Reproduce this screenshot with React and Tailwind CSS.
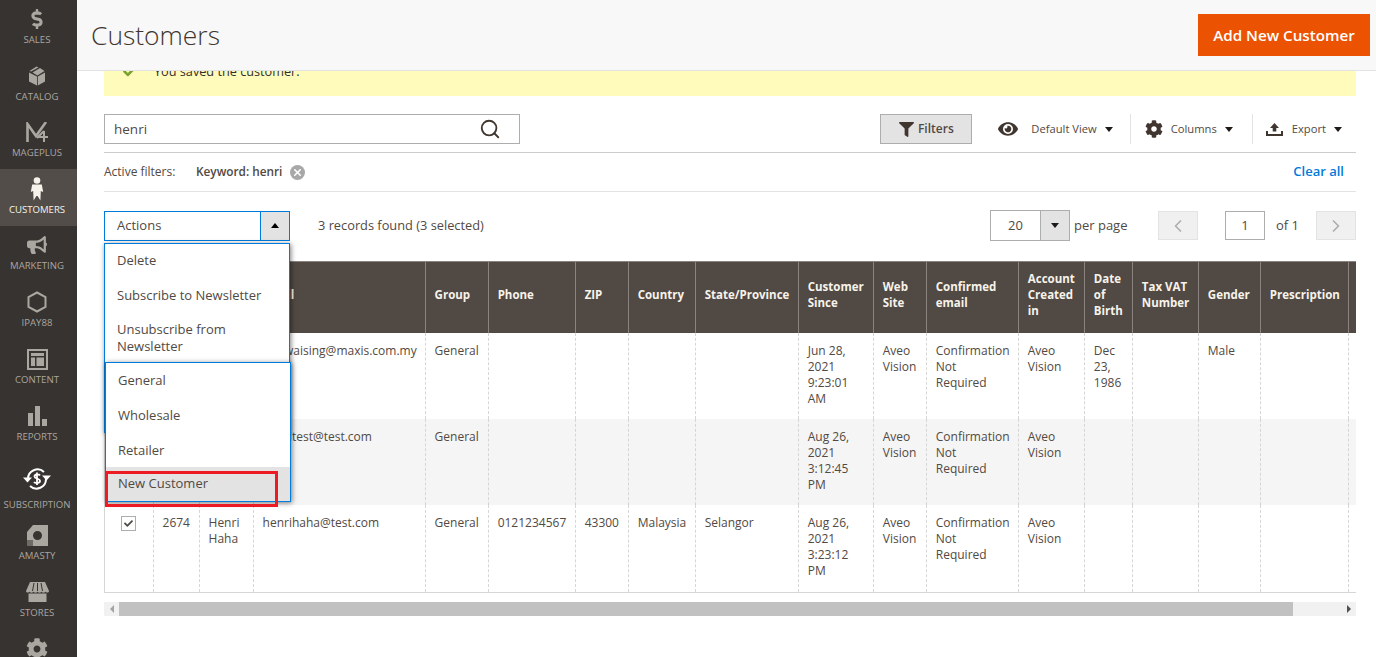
import React from 'react'
import { FaDollarSign, FaBullhorn, FaCog, FaFilter, FaEye, FaCheck } from 'react-icons/fa'
import { ChevronLeft, ChevronRight, Search, X } from 'lucide-react'

const IconCube = () => (
  <svg width="20" height="20" viewBox="0 0 20 20" fill="currentColor">
    <path d="M2 6.5 L10 10.5 V19.5 L2 15.5 Z" />
    <path d="M18 6.5 L10.8 10.5 V19.5 L18 15.5 Z" />
    <path d="M9.5 .5 L11.5 1.5 L4 5.5 L2.5 5 Z" />
    <path d="M13 2 L17.5 5 L10.4 9.4 L5.5 6.4 Z" />
  </svg>
)

const IconM4 = () => (
  <svg width="22" height="20" viewBox="0 0 22 20" fill="none" stroke="currentColor" strokeWidth="2.6">
    <path d="M1.5 20 V2 L10 14 L20 0" />
    <path d="M12 15 H22 M18 9 V20 M18 9 L11 16" strokeWidth="2" />
  </svg>
)

const IconPerson = () => (
  <svg width="14" height="24" viewBox="0 0 14 24" fill="currentColor">
    <circle cx="7" cy="3.5" r="3.3" />
    <path d="M2.2 7.5 H11.8 L13.2 15 L10.8 14 L10.4 23.5 L7.6 19 H6.4 L3.6 23.5 L3.2 14 L.8 15 Z" />
  </svg>
)

const IconContent = () => (
  <svg width="21" height="21" viewBox="0 0 21 21" fill="currentColor">
    <path fillRule="evenodd" d="M0 0 H21 V21 H0 Z M2 2 V19 H19 V2 Z" />
    <rect x="4" y="4" width="13" height="3" />
    <rect x="4" y="8.5" width="4" height="8.5" />
    <rect x="9.5" y="8.5" width="7.5" height="8.5" />
  </svg>
)

const IconBars = () => (
  <svg width="19" height="20" viewBox="0 0 19 20" fill="currentColor">
    <rect x="0" y="7" width="5" height="13" />
    <rect x="7" y="0" width="5" height="20" />
    <rect x="14" y="13" width="5" height="7" />
  </svg>
)

const IconSubscription = () => (
  <svg width="30" height="24" viewBox="0 0 30 24" fill="none" stroke="#fff" strokeWidth="2">
    <path d="M6 12 A9.5 9.5 0 0 1 22 5" />
    <path d="M24 12 A9.5 9.5 0 0 1 8 19" />
    <path d="M1 10.5 H10 L5.5 15.5 Z" fill="#fff" strokeWidth="0" />
    <path d="M20 13.5 H29 L24.5 8.5 Z" transform="rotate(180 24.5 11)" fill="#fff" strokeWidth="0" />
    <path d="M18 8.5 C17 7 12.5 7 12.5 9.5 C12.5 12 18 11 18 14 C18 16.5 13 16.5 12 15 M15 5.5 V18" strokeWidth="1.8" />
  </svg>
)

const IconAmasty = () => (
  <svg width="21" height="21" viewBox="0 0 21 21" fill="currentColor">
    <path fillRule="evenodd" d="M6 0 H21 V21 H4 L0 16 V7 Z M10.5 6 A4.5 4.5 0 1 0 10.5 15 A4.5 4.5 0 1 0 10.5 6 Z" />
    <rect x="0" y="15" width="6" height="6" fill="#6e6a66" />
  </svg>
)

const IconStore = () => (
  <svg width="23" height="20" viewBox="0 0 23 20" fill="currentColor">
    <path d="M4 0 H19 L23 9 C23 11 20 11 19.5 9.8 C18.5 11 16.5 11 15.5 9.8 C14.5 11 12.5 11 11.5 9.8 C10.5 11 8.5 11 7.5 9.8 C6.5 11 4.5 11 3.5 9.8 C3 11 0 11 0 9 Z" />
    <rect x="2.5" y="11.5" width="18" height="8.5" />
    <path d="M8 1 L6.5 9 M11.5 1 V9 M15 1 L16.5 9" stroke="#373330" strokeWidth="1" />
  </svg>
)

const IconHexagon = () => (
  <svg width="20" height="22" viewBox="0 0 20 22" fill="none" stroke="currentColor" strokeWidth="2">
    <path d="M10 1.5 L18.5 6 V16 L10 20.5 L1.5 16 V6 Z" />
  </svg>
)

const IconExport = () => (
  <svg width="17" height="15" viewBox="0 0 17 15" fill="#41362f">
    <path d="M8.5 1 L13 6 H10.3 V9.5 H6.7 V6 H4 Z" />
    <path d="M0 9 H2 V12 H15 V9 H17 V14 H0 Z" />
  </svg>
)

const navItems = [
  { label: 'SALES', icon: <FaDollarSign size={20} />, cls: 'h-[56.5px] pt-[8px]' },
  { label: 'CATALOG', icon: <IconCube />, cls: 'h-[56.5px] pt-[8.5px]' },
  { label: 'MAGEPLUS', icon: <IconM4 />, cls: 'h-[56.5px] pt-[8px]' },
  { label: 'CUSTOMERS', icon: <IconPerson />, active: true, cls: 'h-[57px] pt-[8px]' },
  { label: 'MARKETING', icon: <FaBullhorn size={20} />, cls: 'h-[56.5px] pt-[7.5px]' },
  { label: 'IPAY88', icon: <IconHexagon />, cls: 'h-[56.5px] pt-[8px]' },
  { label: 'CONTENT', icon: <IconContent />, cls: 'h-[57px] pt-[8.5px]' },
  { label: 'REPORTS', icon: <IconBars />, cls: 'h-[56.5px] pt-[8.5px]' },
  { label: 'SUBSCRIPTION', icon: <IconSubscription />, cls: 'h-[63px] pt-[15px]', tall: true },
  { label: 'AMASTY', icon: <IconAmasty />, cls: 'h-[57px] pt-[8px]' },
  { label: 'STORES', icon: <IconStore />, cls: 'h-[56.5px] pt-[8px]' },
  { label: 'SYSTEM', icon: <FaCog size={22} />, cls: 'h-[56.5px] pt-[8px]' },
]

const columns = [
  { w: 'w-[49px]', label: '' },
  { w: 'w-[46px]', label: 'ID' },
  { w: 'w-[54px]', label: 'Name' },
  { w: 'w-[172px]', label: 'Email' },
  { w: 'w-[63px]', label: 'Group' },
  { w: 'w-[87px]', label: 'Phone' },
  { w: 'w-[53px]', label: 'ZIP' },
  { w: 'w-[67px]', label: 'Country' },
  { w: 'w-[103px]', label: 'State/Province' },
  { w: 'w-[75px]', label: 'Customer Since' },
  { w: 'w-[53px]', label: 'Web Site' },
  { w: 'w-[92px]', label: 'Confirmed email' },
  { w: 'w-[66px]', label: 'Account Created in' },
  { w: 'w-[48px]', label: 'Date of Birth' },
  { w: 'w-[66px]', label: 'Tax VAT Number' },
  { w: 'w-[62px]', label: 'Gender' },
  { w: 'w-[88px]', label: 'Prescription' },
  { w: 'w-[60px]', label: '' },
]

const rows = [
  ['', '2601', 'Henri Wai', 'henwaising@maxis.com.my', 'General', '', '', '', '', 'Jun 28, 2021 9:23:01 AM', 'Aveo Vision', 'Confirmation Not Required', 'Aveo Vision', 'Dec 23, 1986', '', 'Male', '', ''],
  ['', '2673', 'Henri Test', 'henritest@test.com', 'General', '', '', '', '', 'Aug 26, 2021 3:12:45 PM', 'Aveo Vision', 'Confirmation Not Required', 'Aveo Vision', '', '', '', '', ''],
  ['', '2674', 'Henri Haha', 'henrihaha@test.com', 'General', '0121234567', '43300', 'Malaysia', 'Selangor', 'Aug 26, 2021 3:23:12 PM', 'Aveo Vision', 'Confirmation Not Required', 'Aveo Vision', '', '', '', '', ''],
]

const Caret = ({ up }) => (
  <span className={up
    ? 'inline-block w-0 h-0 border-x-[4px] border-x-transparent border-b-[5px] border-b-black'
    : 'inline-block w-0 h-0 border-x-[4px] border-x-transparent border-t-[5px] border-t-[#1f1a17]'} />
)

function Sidebar() {
  return (
    <aside className="w-[77px] h-[657px] shrink-0 overflow-hidden bg-[#373330]">
      <div className="-mt-[1px]">
        {navItems.map(item => (
          <div
            key={item.label}
            className={`${item.cls} pr-[3px] flex flex-col items-center ${item.active ? 'bg-[#524d49] text-[#f7f3eb]' : 'text-[#aaa6a0]'}`}
          >
            <div className="h-[24px] flex items-center justify-center">{item.icon}</div>
            <div className={`text-[9.6px] leading-[14px] whitespace-nowrap ${item.tall ? 'mt-[7px]' : 'mt-[2px]'} ${item.active ? 'font-medium' : ''}`}>{item.label}</div>
          </div>
        ))}
      </div>
    </aside>
  )
}

function Toolbar() {
  return (
    <div className="flex items-center justify-between h-[30px] mt-[18px] text-[#514943]">
      <div className="w-[416px] h-[30px] border border-[#adadad] flex items-center justify-between pl-[9px] pr-[18px] text-[13.5px]">
        <span>henri</span>
        <Search size={22} strokeWidth={2} className="text-[#41362f]" />
      </div>
      <div className="flex items-center text-[11.2px] pr-[14px]">
        <div className="w-[92px] h-[30px] bg-[#e3e3e3] border border-[#adadad] flex items-center justify-center gap-[4px] font-semibold text-[12px]">
          <FaFilter size={15} className="text-[#41362f]" />
          <span>Filters</span>
        </div>
        <div className="flex items-center h-[30px] pl-[26px] pr-[17px] border-r border-[#e3e3e3]">
          <FaEye size={20} className="text-[#41362f] mr-[13px]" />
          <span className="mr-[8px]">Default View</span>
          <Caret />
        </div>
        <div className="flex items-center h-[30px] pl-[14px] pr-[19px] border-r border-[#e3e3e3]">
          <FaCog size={18} className="text-[#41362f] mr-[8px]" />
          <span className="mr-[8px]">Columns</span>
          <Caret />
        </div>
        <div className="flex items-center h-[30px] pl-[13px]">
          <span className="mr-[9px] flex"><IconExport /></span>
          <span className="mr-[8px]">Export</span>
          <Caret />
        </div>
      </div>
    </div>
  )
}

function ActionsMenu() {
  return (
    <>
      <div className="absolute -left-[1px] top-[31px] w-[186px] h-[190px] z-10 bg-white border border-[#007bdb] shadow-[1px_1px_5px_rgba(0,0,0,0.5)] pt-[8px] pl-[12px] pr-[10px] text-[13px] leading-[17px] text-[#514943]">
        <div className="h-[35px]">Delete</div>
        <div className="h-[34px]">Subscribe to Newsletter</div>
        <div>Unsubscribe from Newsletter</div>
      </div>
      <div className="absolute left-0 top-[150px] w-[186px] h-[140px] z-20 bg-white border border-[#007bdb] shadow-[1px_1px_5px_rgba(0,0,0,0.5)] text-[13px] leading-[17px] text-[#514943]">
        <div className="h-[35px] pt-[9px] pl-[12px]">General</div>
        <div className="h-[35px] pt-[9px] pl-[12px]">Wholesale</div>
        <div className="h-[34px] pt-[9px] pl-[12px]">Retailer</div>
        <div className="h-[34px] pt-[8.5px] pl-[12px] bg-[#e3e3e3]">New Customer</div>
      </div>
      <div className="absolute left-0 top-[259px] w-[173px] h-[36px] z-30 border-[3px] border-[#ed1c24]" />
    </>
  )
}

function ActionsRow() {
  return (
    <div className="flex items-center justify-between h-[31px] mt-[18px] text-[13px] text-[#514943]">
      <div className="flex items-center">
        <div className="relative w-[186px] h-[30px] border border-[#007bdb] flex">
          <div className="flex-1 flex items-center pl-[12px] pt-[1px]">Actions</div>
          <div className="w-[29px] bg-[#e3e3e3] border-l border-[#007bdb] flex items-center justify-center"><Caret up /></div>
          <ActionsMenu />
        </div>
        <div className="ml-[28px] pt-[1px] text-[12.8px]">3 records found (3 selected)</div>
      </div>
      <div className="flex items-center">
        <div className="w-[80px] h-[31px] border border-[#adadad] flex">
          <div className="flex-1 flex items-center justify-center">20</div>
          <div className="w-[29px] bg-[#e3e3e3] border-l border-[#adadad] flex items-center justify-center"><Caret /></div>
        </div>
        <span className="ml-[4px] w-[84px]">per page</span>
        <div className="w-[40px] h-[29px] bg-[#f0f0f0] border border-[#e3e3e3] flex items-center justify-center">
          <ChevronLeft size={20} className="text-[#adadad]" />
        </div>
        <div className="ml-[27px] w-[40px] h-[29px] border border-[#adadad] flex items-center justify-center">1</div>
        <span className="ml-[11px] w-[40px]">of 1</span>
        <div className="w-[40px] h-[29px] bg-[#f0f0f0] border border-[#e3e3e3] flex items-center justify-center">
          <ChevronRight size={20} className="text-[#adadad]" />
        </div>
      </div>
    </div>
  )
}

function Grid() {
  return (
    <div className="mt-[20px] overflow-hidden">
      <table className="table-fixed border-collapse w-[1305px] text-[12px] leading-[16px] text-[#514943]">
        <colgroup>
          {columns.map((c, i) => <col key={i} className={c.w} />)}
        </colgroup>
        <thead>
          <tr className="h-[71px] bg-[#514943] text-[#f7f3eb]">
            {columns.map((c, i) => (
              <th key={i} className="px-[8.5px] pb-[4px] text-left align-middle text-[11.5px] font-bold border-l border-[#8a837f] first:border-l-0 border-t border-t-[#8a837f]">
                {c.label}
              </th>
            ))}
          </tr>
        </thead>
        <tbody>
          {rows.map((r, ri) => (
            <tr key={ri} className={ri === 1 ? 'h-[86px] bg-[#f5f5f5]' : ri === 2 ? 'h-[88px] bg-white' : 'h-[86px] bg-white'}>
              {r.map((cell, ci) => (
                <td
                  key={ci}
                  className={`px-[8.5px] pt-[10px] align-top ${ri === 2 ? 'border-b border-b-[#d6d6d6] [border-bottom-style:solid]' : ''} ${ci === 0 ? 'border-l border-l-[#d6d6d6]' : 'border-l border-dashed border-l-[#d6d6d6]'}`}
                >
                  {ci === 0 ? (
                    <div className="ml-[7.5px] mt-[1px] w-[15px] h-[15px] border border-[#adadad] bg-white flex items-center justify-center">
                      <FaCheck size={9} className="text-[#514943]" />
                    </div>
                  ) : cell}
                </td>
              ))}
            </tr>
          ))}
        </tbody>
      </table>
    </div>
  )
}

function ScrollBar() {
  return (
    <div className="mt-[9px] h-[14px] bg-[#f1f1f1] flex items-center">
      <div className="w-[15px] flex justify-center">
        <span className="w-0 h-0 border-y-[4px] border-y-transparent border-r-[4px] border-r-[#a3a3a3]" />
      </div>
      <div className="w-[1174px] h-[14px] bg-[#c1c1c1]" />
      <div className="flex-1 flex justify-end pr-[5px]">
        <span className="w-0 h-0 border-y-[4px] border-y-transparent border-l-[4px] border-l-[#505050]" />
      </div>
    </div>
  )
}

export default function App() {
  return (
    <div className="flex h-[657px] w-[1376px] overflow-hidden bg-white font-['Open_Sans',sans-serif]">
      <Sidebar />
      <main className="flex-1 min-w-0">
        <header className="h-[71px] bg-[#f8f8f8] border-b border-[#e3e3e3] flex items-center justify-between pl-[14px] pr-[6px]">
          <h1 className="text-[26.4px] font-light text-[#41362f] mt-[1px]">Customers</h1>
          <div className="w-[172px] h-[42px] bg-[#eb5202] text-white font-semibold text-[15.2px] flex items-center justify-center">Add New Customer</div>
        </header>
        <div className="ml-[27px] mr-[20px]">
          <div className="h-[25px] bg-[#fffbbb] overflow-hidden">
            <div className="-mt-[10px] flex items-center pl-[19px] text-[12.7px] leading-[20px] text-[#303030]">
              <FaCheck size={13} className="text-[#79a22e] mr-[18px]" />
              <span>You saved the customer.</span>
            </div>
          </div>
          <Toolbar />
          <div className="mt-[8px] h-[40px] border-y border-t-[#cccccc] border-b-[#e3e3e3] flex items-center justify-between text-[12px] text-[#514943] pr-[12px]">
            <div className="flex items-center">
              <span className="w-[92px]">Active filters:</span>
              <span className="font-semibold text-[11.8px]">Keyword: henri</span>
              <span className="ml-[8px] w-[15px] h-[15px] rounded-full bg-[#a8a8a8] text-white flex items-center justify-center">
                <X size={11} strokeWidth={3.5} />
              </span>
            </div>
            <span className="text-[#007bdb] text-[13px] font-semibold">Clear all</span>
          </div>
          <ActionsRow />
          <Grid />
          <ScrollBar />
        </div>
      </main>
    </div>
  )
}
